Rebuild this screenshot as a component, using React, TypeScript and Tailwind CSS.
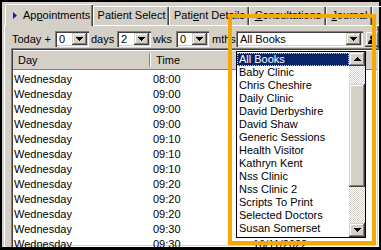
import React from "react";

const times = ["08:00", "09:00", "09:00", "09:00", "09:10", "09:10", "09:10", "09:20", "09:20", "09:20", "09:30", "09:30"];

const books = [
  "All Books",
  "Baby Clinic",
  "Chris Cheshire",
  "Daily Clinic",
  "David Derbyshire",
  "David Shaw",
  "Generic Sessions",
  "Health Visitor",
  "Kathryn Kent",
  "Nss Clinic",
  "Nss Clinic 2",
  "Scripts To Print",
  "Selected Doctors",
  "Susan Somerset",
];

const raised =
  "bg-[#d4d0c8] shadow-[inset_-1px_-1px_0_#404040,inset_1px_1px_0_#d4d0c8,inset_-2px_-2px_0_#808080,inset_2px_2px_0_#fff]";
const sunken =
  "shadow-[inset_1px_1px_0_#808080,inset_2px_2px_0_#404040,inset_-1px_-1px_0_#fff,inset_-2px_-2px_0_#d4d0c8]";

function Down() {
  return (
    <svg width="7" height="4" viewBox="0 0 7 4" shapeRendering="crispEdges">
      <path d="M0 0h7v1h-1v1h-1v1h-1v1h-1v-1h-1v-1h-1v-1h-1z" fill="#000" />
    </svg>
  );
}

function Up() {
  return (
    <svg width="7" height="4" viewBox="0 0 7 4" shapeRendering="crispEdges">
      <path d="M0 4h7v-1h-1v-1h-1v-1h-1v-1h-1v1h-1v1h-1v1h-1z" fill="#000" />
    </svg>
  );
}

function Combo({ w, value }: { w: string; value: string }) {
  return (
    <div className={`flex h-[16px] shrink-0 items-stretch bg-white p-[2px] ${w} ${sunken}`}>
      <span className="flex flex-1 items-center pl-[2px] leading-none">{value}</span>
      <span className={`flex w-[15px] items-center justify-center ${raised}`}>
        <Down />
      </span>
    </div>
  );
}

function Tab({ w, children }: { w: string; children: React.ReactNode }) {
  return (
    <div
      className={`flex h-[19px] shrink-0 items-center justify-center border-l border-t border-white pb-[1px] shadow-[inset_-1px_0_0_#404040,inset_-2px_0_0_#808080] ${w}`}
    >
      {children}
    </div>
  );
}

export default function App() {
  return (
    <div className="relative h-[250px] w-[381px] overflow-hidden bg-black font-['Liberation_Sans',Arial,sans-serif] text-[11px] text-black">
      <div className="absolute left-[2px] top-[2px] flex h-[245px] w-[377px] flex-col bg-[#d4d0c8]">
        {/* tabs */}
        <div className="flex h-[23px] shrink-0 items-end pl-[3px]">
          <div className="relative z-10 -mb-[1px] flex h-[22px] w-[88px] shrink-0 items-center gap-[6px] border-l border-t border-white bg-[#d4d0c8] pl-[7px] pb-[1px] shadow-[inset_-1px_0_0_#404040,inset_-2px_0_0_#808080]">
            <svg width="4" height="7" viewBox="0 0 4 7">
              <path d="M0 0L4 3.5L0 7z" fill="#0b1fc8" />
            </svg>
            <span>
              Ap<u>p</u>ointments
            </span>
          </div>
          <Tab w="w-[76px]">Patient Select</Tab>
          <Tab w="w-[80px]">
            <span>
              Pati<u>e</u>nt Details
            </span>
          </Tab>
          <Tab w="w-[77px]">
            <span>
              <u>C</u>onsultations
            </span>
          </Tab>
          <Tab w="w-[46px]">
            <span>
              <u>J</u>ournal
            </span>
          </Tab>
          <Tab w="w-[20px]">
            <span />
          </Tab>
        </div>

        {/* tab page */}
        <div className="ml-[2px] flex min-h-0 flex-1 flex-col border-l border-t border-white pl-[6px] pt-[5px] shadow-[inset_-1px_0_0_#404040,inset_-2px_0_0_#808080]">
          <div className="flex h-[16px] shrink-0 items-center pl-[1px]">
            <span className="w-[43px] shrink-0">Today +</span>
            <Combo w="w-[34px]" value="0" />
            <span className="w-[28px] shrink-0 pl-[2px]">days</span>
            <Combo w="w-[34px]" value="2" />
            <span className="w-[25px] shrink-0 pl-[2px]">wks</span>
            <Combo w="w-[33px]" value="0" />
            <span className="w-[27px] shrink-0 pl-[3px]">mths</span>
            <Combo w="w-[127px]" value="All Books" />
            <div className={`ml-[2px] flex h-[16px] w-[14px] shrink-0 items-center justify-center ${raised}`}>
              <svg width="8" height="9" viewBox="0 0 8 9">
                <circle cx="4" cy="2.5" r="2" fill="#000" />
                <path d="M0 9c0-3 1.5-4.5 4-4.5S8 6 8 9z" fill="#000" />
              </svg>
            </div>
          </div>

          {/* list view */}
          <div className={`mt-[1px] flex min-h-0 flex-1 flex-col overflow-hidden bg-white p-[2px] ${sunken}`}>
            <div className="flex h-[20px] shrink-0 items-stretch bg-[#d4d0c8] shadow-[inset_0_-1px_0_#808080,inset_0_1px_0_#fff]">
              <div className="flex w-[136px] shrink-0 items-center pl-[5px]">Day</div>
              <div className="my-[3px] w-[2px] shrink-0 border-l border-r border-l-[#808080] border-r-white" />
              <div className="flex w-[98px] shrink-0 items-center pl-[5px]">Time</div>
              <div className="my-[3px] w-[2px] shrink-0 border-l border-r border-l-[#808080] border-r-white" />
              <div className="flex-1" />
            </div>
            <div className="flex flex-col pt-[2px]">
              {times.map((t, i) => (
                <div key={i} className="flex h-[15px] shrink-0 items-center leading-[15px]">
                  <span className="w-[137px] shrink-0 pl-[1px]">Wednesday</span>
                  <span className="w-[100px] shrink-0 pl-[3px]">{t}</span>
                  {i === times.length - 1 && <span className="pl-[3px]">16/11/2022</span>}
                </div>
              ))}
            </div>
          </div>
        </div>
      </div>

      {/* open dropdown */}
      <div className="absolute left-[236px] top-[51px] flex h-[187px] w-[130px] border border-black bg-white">
        <div className="flex min-w-0 flex-1 flex-col pt-[1px]">
          {books.map((b, i) => (
            <div
              key={b}
              className={
                i === 0
                  ? "h-[13px] bg-[#0a246a] pl-[2px] leading-[13px] text-white outline-1 -outline-offset-1 outline-dotted outline-[#e8d27a]"
                  : "h-[13px] pl-[2px] leading-[13px]"
              }
            >
              {b}
            </div>
          ))}
        </div>
        <div className="flex w-[16px] shrink-0 flex-col">
          <div className={`flex h-[14px] shrink-0 items-center justify-center ${raised}`}>
            <Up />
          </div>
          <div className="h-[18px] shrink-0 bg-[image:repeating-conic-gradient(#fff_0_25%,#d4d0c8_0_50%)] bg-[length:2px_2px]" />
          <div className={`h-[103px] shrink-0 ${raised}`} />
          <div className="flex-1 bg-[image:repeating-conic-gradient(#fff_0_25%,#d4d0c8_0_50%)] bg-[length:2px_2px]" />
          <div className={`flex h-[14px] shrink-0 items-center justify-center ${raised}`}>
            <Down />
          </div>
        </div>
      </div>

      {/* highlight frame */}
      <div className="absolute left-[228px] top-[14px] h-[231px] w-[148px] border-4 border-[#f4a800]" />
    </div>
  );
}
